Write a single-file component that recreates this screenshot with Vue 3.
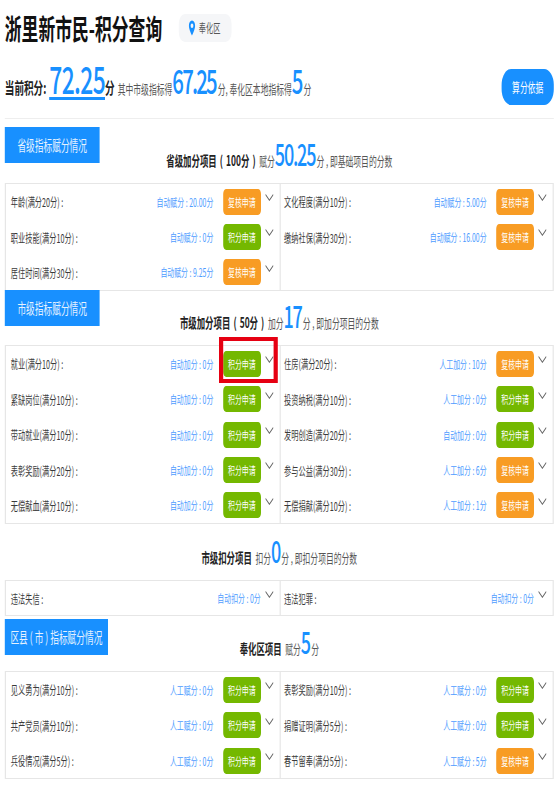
<template>
  <div class="viewport">
    <div class="page">
      <div class="top">
        <h1 class="title">浙里新市民-积分查询</h1>
        <div class="area">
          <svg class="pin" width="12" height="16" viewBox="0 0 12 16">
            <path d="M6 0.5C3 0.5 0.8 2.8 0.8 5.7 0.8 9.4 6 15.5 6 15.5s5.200-6.100 5.200-9.800C11.200 2.800 9 0.500 6 0.500zM6 8A2.300 2.300 0 1 1 6 3.400 2.300 2.300 0 0 1 6 8z" fill="#1890ff" />
          </svg>
          <span>奉化区</span>
        </div>
      </div>

      <div class="summary">
        <div class="summary-text">
          <b class="cur">当前积分:</b>
          <span class="total">72.25</span>
          <b class="cur">分</b>
          <span class="note first">其中市级指标得</span>
          <span class="num">67.25</span>
          <span class="note">分, 奉化区本地指标得</span>
          <span class="num">5</span>
          <span class="note">分</span>
        </div>
        <button class="basis">算分依据</button>
      </div>

      <section v-for="sec in sections" :key="sec.name" class="section">
        <div class="head" :class="sec.headClass">
          <div v-if="sec.ribbon" class="ribbon" :class="{ wide: sec.wide }">{{ sec.ribbon }}</div>
          <div class="head-title">
            <b class="head-name">{{ sec.name }}</b>
            <span class="head-note">{{ sec.verb }}</span>
            <span class="head-num">{{ sec.score }}</span>
            <span class="head-note">{{ sec.tail }}</span>
          </div>
        </div>
        <div class="grid">
          <div v-for="item in sec.items" :key="item.label" class="cell" :class="{ plain: !item.btn }">
            <span class="label">{{ item.label }} :</span>
            <span class="value">{{ item.value }}</span>
            <button v-if="item.btn" class="apply" :class="item.btn === 'r' ? 'orange' : 'green'">
              {{ item.btn === 'r' ? '复核申请' : '积分申请' }}
            </button>
            <svg class="chevron" width="14" height="7" viewBox="0 0 14 7">
              <polyline points="0.500,0.500 7,6.300 13.500,0.500" fill="none" stroke="#666" stroke-width="1.200" />
            </svg>
            <span v-if="item.mark" class="mark"></span>
          </div>
          <div v-if="sec.items.length % 2" class="cell empty"></div>
        </div>
      </section>
    </div>
  </div>
</template>

<script setup>
const auto = '自动赋分 : '
const autoAdd = '自动加分 : '
const manAdd = '人工加分 : '
const man = '人工赋分 : '

const sections = [
  {
    ribbon: '省级指标赋分情况',
    name: '省级加分项目 ( 100分 )',
    verb: '赋分',
    score: '50.25',
    tail: '分 , 即基础项目的分数',
    headClass: 'head-first',
    items: [
      { label: '年龄(满分20分)', value: auto + '20.00分', btn: 'r' },
      { label: '文化程度(满分10分)', value: auto + '5.00分', btn: 'r' },
      { label: '职业技能(满分10分)', value: auto + '0分', btn: 'g' },
      { label: '缴纳社保(满分30分)', value: auto + '16.00分', btn: 'r' },
      { label: '居住时间(满分30分)', value: auto + '9.25分', btn: 'r' }
    ]
  },
  {
    ribbon: '市级指标赋分情况',
    name: '市级加分项目 ( 50分 )',
    verb: '加分',
    score: '17',
    tail: '分 , 即加分项目的分数',
    headClass: 'head-short',
    items: [
      { label: '就业(满分10分)', value: autoAdd + '0分', btn: 'g', mark: true },
      { label: '住房(满分20分)', value: manAdd + '10分', btn: 'r' },
      { label: '紧缺岗位(满分10分)', value: autoAdd + '0分', btn: 'g' },
      { label: '投资纳税(满分10分)', value: manAdd + '0分', btn: 'g' },
      { label: '带动就业(满分10分)', value: autoAdd + '0分', btn: 'g' },
      { label: '发明创造(满分20分)', value: autoAdd + '0分', btn: 'g' },
      { label: '表彰奖励(满分20分)', value: autoAdd + '0分', btn: 'g' },
      { label: '参与公益(满分30分)', value: manAdd + '6分', btn: 'r' },
      { label: '无偿献血(满分10分)', value: autoAdd + '0分', btn: 'g' },
      { label: '无偿捐献(满分10分)', value: manAdd + '1分', btn: 'r' }
    ]
  },
  {
    name: '市级扣分项目',
    verb: '扣分',
    score: '0',
    tail: '分 , 即扣分项目的分数',
    headClass: 'head-tall',
    items: [
      { label: '违法失信', value: '自动扣分 : 0分' },
      { label: '违法犯罪', value: '自动扣分 : 0分' }
    ]
  },
  {
    ribbon: '区县 ( 市 ) 指标赋分情况',
    wide: true,
    name: '奉化区项目',
    verb: '赋分',
    score: '5',
    tail: '分',
    items: [
      { label: '见义勇为(满分10分)', value: man + '0分', btn: 'g' },
      { label: '表彰奖励(满分10分)', value: man + '0分', btn: 'g' },
      { label: '共产党员(满分10分)', value: man + '0分', btn: 'g' },
      { label: '捐赠证明(满分5分)', value: man + '0分', btn: 'g' },
      { label: '兵役情况(满分5分)', value: man + '0分', btn: 'g' },
      { label: '春节留奉(满分5分)', value: man + '5分', btn: 'r' }
    ]
  }
]
</script>

<style>
html,
body {
  margin: 0;
  overflow: hidden;
  background: #fff;
}
</style>

<style scoped>
/* the whole page is squeezed horizontally: widths below are real px / 0.6 */
.viewport {
  width: 557px;
  height: 785px;
  overflow: hidden;
}

.page {
  width: 928px;
  box-sizing: border-box;
  padding: 0 5px 0 8px;
  transform: scaleX(0.6);
  transform-origin: 0 0;
  font-family: "Noto Sans CJK SC", "Liberation Sans", sans-serif;
  color: #333;
}

.top {
  display: flex;
  align-items: center;
  gap: 28px;
  height: 55px;
}

.title {
  margin: 0;
  font-size: 28px;
  line-height: 34px;
  font-weight: 700;
  color: #111;
}

.area {
  display: flex;
  align-items: center;
  gap: 5px;
  width: 88px;
  height: 28px;
  box-sizing: border-box;
  padding-left: 16px;
  border-radius: 10px;
  background: #f5f6f8;
  font-size: 12px;
  color: #555;
}

.summary {
  display: flex;
  align-items: center;
  justify-content: space-between;
  height: 63px;
  border-bottom: 1px solid #eee;
}

.summary-text {
  display: flex;
  align-items: baseline;
  line-height: 40px;
  margin-bottom: 6px;
}

.cur {
  font-size: 16px;
  color: #222;
}

.total {
  margin-left: 5px;
  font-size: 38px;
  font-weight: 500;
  letter-spacing: -1px;
  color: #1890ff;
  border-bottom: 3px solid #1890ff;
  line-height: 38px;
}

.note {
  font-size: 13px;
  color: #555;
}

.note.first {
  margin-left: 5px;
}

.num {
  margin-right: 3px;
  font-size: 34px;
  font-weight: 500;
  letter-spacing: -3px;
  color: #1890ff;
}

.basis {
  width: 87px;
  height: 36px;
  padding: 0;
  border: 0;
  border-radius: 16px;
  background: #1890ff;
  color: #fff;
  font-family: inherit;
  font-size: 13px;
}

.head {
  display: grid;
  height: 56px;
}

.head-first {
  margin-top: 8px;
}

.head-short {
  height: 55px;
}

.head-tall {
  height: 57px;
}

.ribbon {
  grid-area: 1 / 1;
  justify-self: start;
  align-self: start;
  width: 158px;
  height: 36px;
  background: #1890ff;
  color: #e6f2ff;
  font-size: 14.500px;
  line-height: 36px;
  text-align: center;
}

.ribbon.wide {
  width: 172px;
  margin-top: 4px;
}

.head-title {
  grid-area: 1 / 1;
  align-self: end;
  display: flex;
  justify-content: center;
  align-items: baseline;
  line-height: 30px;
  padding-bottom: 7px;
}

.head-name {
  font-size: 14px;
  word-spacing: 2px;
  color: #222;
  margin-right: 6px;
}

.head-note {
  font-size: 13px;
  color: #555;
}

.head-num {
  margin-right: 2px;
  font-size: 30px;
  font-weight: 500;
  letter-spacing: -2px;
  color: #1890ff;
}

.grid {
  display: grid;
  grid-template-columns: 1fr 1fr;
  margin-bottom: -1px;
  border: 1px solid #e6e6e6;
  border-width: 1px 2px;
}

.cell {
  position: relative;
  display: flex;
  align-items: center;
  height: 35.400px;
  box-sizing: border-box;
  padding: 0 10px 0 8px;
}

.cell.plain {
  height: 34px;
}

.cell:nth-child(even) {
  border-left: 2px solid #e6e6e6;
  padding-left: 6px;
}

.label {
  flex: 1;
  font-size: 12px;
  color: #3a3a3a;
}

.value {
  font-size: 11.500px;
  color: #4c9bff;
}

.apply {
  width: 63px;
  height: 26px;
  margin-left: 16px;
  padding: 0;
  border: 0;
  border-radius: 5px;
  color: #fff;
  font-family: inherit;
  font-size: 11.500px;
}

.orange {
  background: #f89c24;
}

.green {
  background: #74b800;
}

.chevron {
  align-self: flex-start;
  margin: 10px 0 0 7px;
}

.mark {
  position: absolute;
  top: -9px;
  right: 3px;
  width: 98px;
  height: 46px;
  box-sizing: border-box;
  border: 4px solid #e60012;
  border-left-width: 7px;
  border-right-width: 7px;
}
</style>
